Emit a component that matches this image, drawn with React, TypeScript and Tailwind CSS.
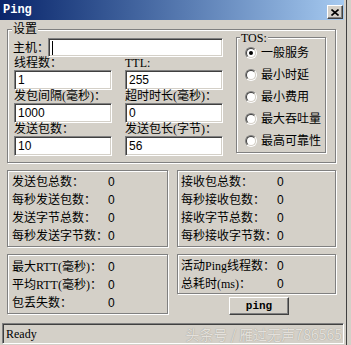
const cjk = "font-['Liberation_Serif','Noto_Sans_CJK_SC',serif]";
const sans = "font-['Liberation_Sans','Noto_Sans_CJK_SC',sans-serif]";

const etched = "border border-[#808080] shadow-[inset_1px_1px_0_#ffffff,1px_1px_0_#ffffff]";
const sunken =
  "border border-t-[#808080] border-l-[#808080] border-b-white border-r-white shadow-[inset_1px_1px_0_#404040,inset_-1px_-1px_0_#d4d0c8]";
const raised =
  "border border-t-white border-l-white border-r-[#404040] border-b-[#404040] shadow-[inset_-1px_-1px_0_#808080]";

function Field({ value, caret }: { value?: string; caret?: boolean }) {
  return (
    <div className={`${sunken} bg-white h-full flex items-center pl-[3px] text-[12px] leading-[12px] text-black ${sans}`}>
      {caret ? <span className="w-[1px] h-[14px] bg-black" /> : value}
    </div>
  );
}

function LabeledField({ label, value }: { label: string; value: string }) {
  return (
    <div className="flex flex-col">
      <span className={`h-[13px] leading-[12px] text-[12px] whitespace-nowrap ${cjk}`}>{label}</span>
      <div className="h-[20px]">
        <Field value={value} />
      </div>
    </div>
  );
}

function Radio({ label, checked }: { label: string; checked?: boolean }) {
  return (
    <div className="h-[22px] flex items-center gap-[4px]">
      <div className="w-[12px] h-[12px] rounded-full border border-t-[#808080] border-l-[#808080] border-r-white border-b-white">
        <div className="w-full h-full rounded-full border border-t-[#404040] border-l-[#404040] border-r-[#d4d0c8] border-b-[#d4d0c8] bg-white flex items-center justify-center">
          {checked && <div className="w-[4px] h-[4px] rounded-full bg-black" />}
        </div>
      </div>
      <span className={`text-[12px] leading-[12px] whitespace-nowrap ${cjk}`}>{label}</span>
    </div>
  );
}

function Stat({ label, value = "0" }: { label: string; value?: string }) {
  return (
    <div className="h-[18px] flex items-center text-[12px] leading-[12px]">
      <span className={`w-[96px] shrink-0 whitespace-nowrap ${cjk}`}>{label}</span>
      <span className={sans}>{value}</span>
    </div>
  );
}

export default function App() {
  return (
    <div className="w-[351px] h-[345px] bg-[#d4d0c8] overflow-hidden text-black">
      <div className="w-[347px] h-[345px] flex flex-col border-r border-r-[#404040]">
        {/* title bar */}
        <div className="w-[344px] h-[20px] flex items-start justify-between bg-gradient-to-r from-[#0a246a] to-[#a6caf0]">
          <span className="pl-[3px] pt-[4px] text-white font-bold text-[12px] leading-[12px] font-['Liberation_Mono',monospace]">
            Ping
          </span>
          <button className={`${raised} bg-[#d4d0c8] w-[16px] h-[14px] mt-[5px] mr-[1px] flex items-center justify-center`}>
            <svg width="8" height="7" viewBox="0 0 8 7">
              <path d="M0.5 0.5 L7.5 6.5 M7.5 0.5 L0.5 6.5" stroke="#000" strokeWidth="1.6" />
            </svg>
          </button>
        </div>

        <div className="flex flex-col pl-[7px]">
          {/* settings */}
          <div className={`${etched} relative w-[329px] h-[134px] mt-[9px] flex pl-[5px] pt-[7px]`}>
            <span className={`absolute -top-[7px] left-[4px] px-[1px] bg-[#d4d0c8] text-[12px] leading-[12px] ${cjk}`}>设置</span>
            <div className="w-[210px] mt-[1px] flex flex-col">
              <div className="flex h-[19px]">
                <span className={`w-[35px] shrink-0 whitespace-nowrap flex items-center text-[12px] leading-[12px] ${cjk}`}>主机：</span>
                <div className="flex-1">
                  <Field caret />
                </div>
              </div>
              <div className="grid grid-cols-[98px_98px] gap-x-[13px] pl-[1px]">
                <LabeledField label="线程数：" value="1" />
                <LabeledField label="TTL:" value="255" />
                <LabeledField label="发包间隔(毫秒)：" value="1000" />
                <LabeledField label="超时时长(毫秒)：" value="0" />
                <LabeledField label="发送包数：" value="10" />
                <LabeledField label="发送包长(字节)：" value="56" />
              </div>
            </div>
            <div className={`${etched} relative ml-[13px] w-[90px] h-[116px] flex flex-col pl-[8px] pt-[4px]`}>
              <span className={`absolute -top-[6px] left-[3px] px-[1px] bg-[#d4d0c8] text-[12px] leading-[12px] ${cjk}`}>TOS:</span>
              <Radio label="一般服务" checked />
              <Radio label="最小时延" />
              <Radio label="最小费用" />
              <Radio label="最大吞吐量" />
              <Radio label="最高可靠性" />
            </div>
          </div>

          {/* counters */}
          <div className="flex gap-[9px] mt-[7px]">
            <div className={`${etched} w-[161px] h-[77px] pl-[4px] pt-[2px] flex flex-col`}>
              <Stat label="发送包总数：" />
              <Stat label="每秒发送包数：" />
              <Stat label="发送字节总数：" />
              <Stat label="每秒发送字节数：" />
            </div>
            <div className={`${etched} w-[159px] h-[77px] pl-[3px] pt-[2px] flex flex-col`}>
              <Stat label="接收包总数：" />
              <Stat label="每秒接收包数：" />
              <Stat label="接收字节总数：" />
              <Stat label="每秒接收字节数：" />
            </div>
          </div>

          <div className="flex gap-[9px] mt-[7px]">
            <div className={`${etched} w-[161px] h-[60px] pl-[4px] pt-[3px] flex flex-col`}>
              <Stat label="最大RTT(毫秒)：" />
              <Stat label="平均RTT(毫秒)：" />
              <Stat label="包丢失数：" />
            </div>
            <div className="w-[159px] flex flex-col">
              <div className={`${etched} h-[40px] pl-[3px] pt-[2px] flex flex-col`}>
                <Stat label="活动Ping线程数：" />
                <Stat label="总耗时(ms)：" value="0" />
              </div>
              <button
                className={`${raised} bg-[#d4d0c8] w-[60px] h-[18px] mt-[3px] ml-[52px] flex items-center justify-center text-[11px] leading-[11px] font-bold font-['Liberation_Mono',monospace]`}
              >
                ping
              </button>
            </div>
          </div>
        </div>

        {/* status bar */}
        <div className={`${sunken} ml-[2px] mt-[8px] w-[342px] h-[21px] flex items-center justify-between pl-[3px] pr-[1px]`}>
          <span className={`text-[12px] leading-[12px] ${cjk}`}>Ready</span>
          <span className="text-[14px] leading-[14px] text-[#e4e1dc] [text-shadow:0_0_1px_#8f8b84] font-['Noto_Sans_CJK_SC',sans-serif]">
            头条号 / 雁过无声786565
          </span>
        </div>
      </div>
    </div>
  );
}
